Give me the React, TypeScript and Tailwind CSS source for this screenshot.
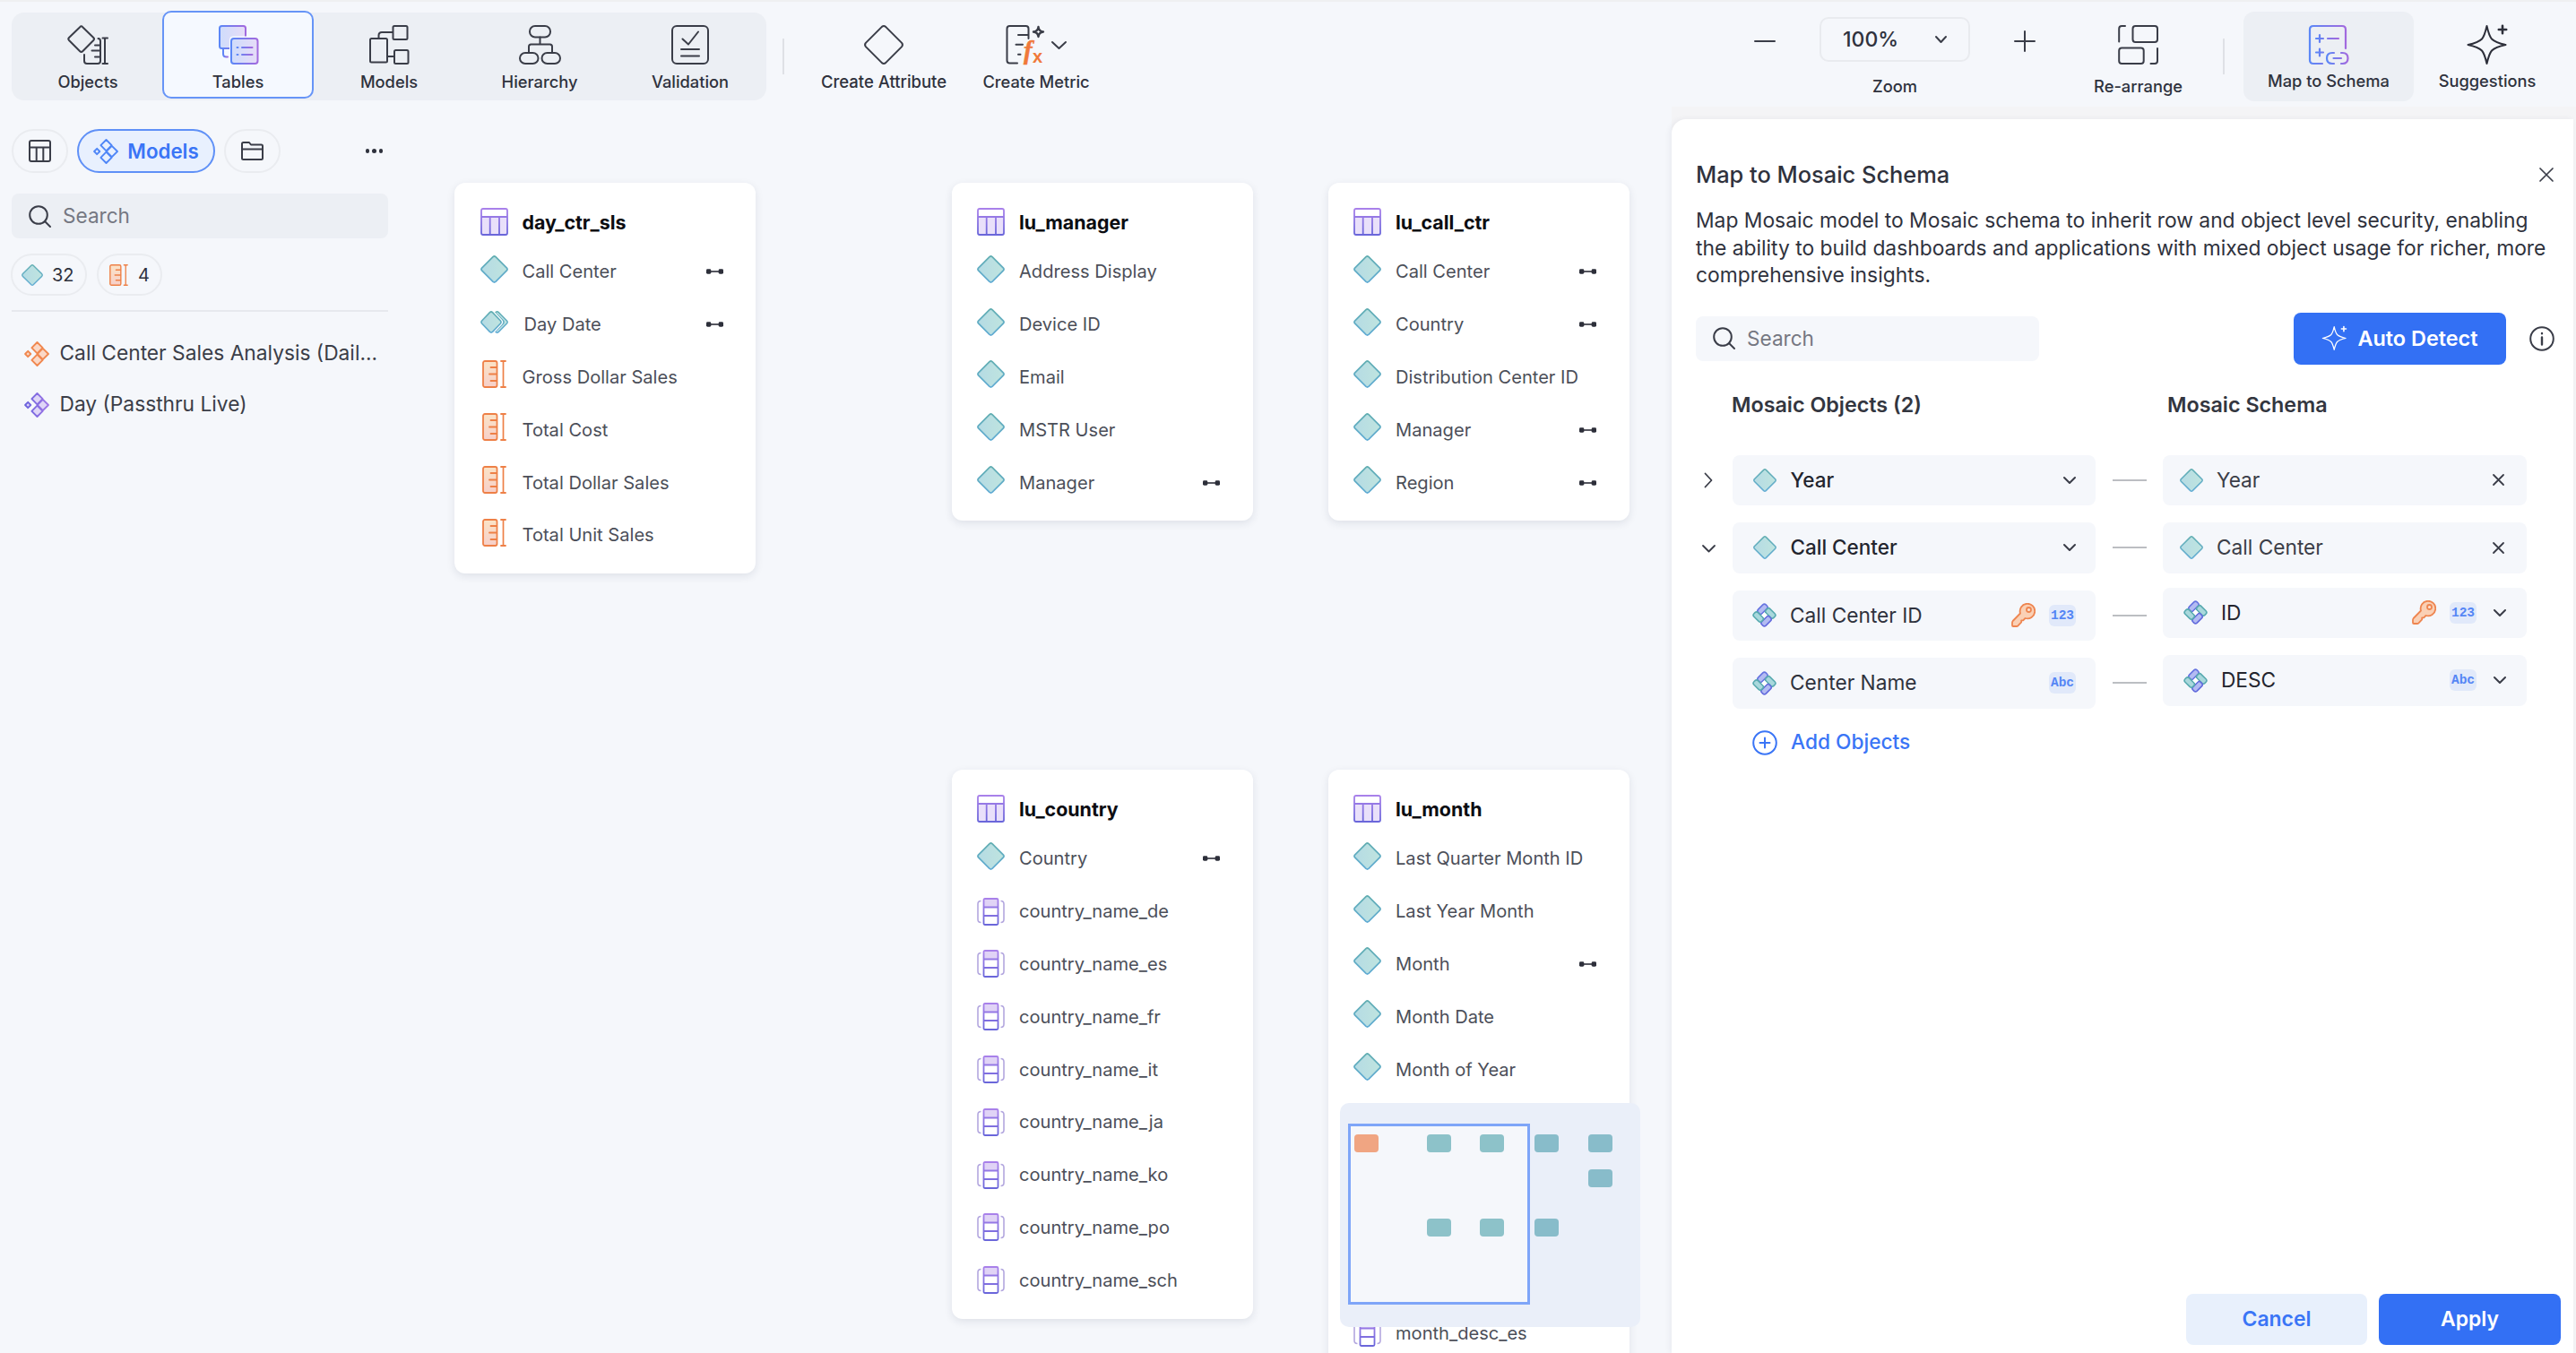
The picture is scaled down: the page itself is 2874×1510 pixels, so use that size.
import React from 'react';
import type { ReactNode } from 'react';

/* Shared gradient definitions used by the icons */
function Gradients() {
  const defs: [string, string, string, boolean][] = [
    ['gBrand', '#5b87f7', '#a26ade', true],
    ['gBrandFill', '#cfdcfb', '#e6dcf8', true],
    ['gTable', '#a981ea', '#6a66da', false],
    ['gAttr', '#62aeb2', '#62acd4', false],
    ['gAttrFill', '#b5dbe4', '#bfe4df', true],
    ['gMetricFill', '#fbe3c6', '#f6cfc9', false],
    ['gPurple', '#6a63dd', '#a077e6', true],
  ];
  return (
    <svg className="absolute size-0" aria-hidden="true">
      <defs>
        {defs.map(([id, a, b, horizontal]) => (
          <linearGradient key={id} id={id} x1="0" y1="0" x2={horizontal ? '1' : '0'} y2={horizontal ? '0' : '1'}>
            <stop offset="0" stopColor={a} />
            <stop offset="1" stopColor={b} />
          </linearGradient>
        ))}
      </defs>
    </svg>
  );
}

function Icon({ w, h, color = '#3a3d48', sw = 2, className = '', children }: { w: number; h: number; color?: string; sw?: number; className?: string; children: ReactNode }) {
  return (
    <svg width={w} height={h} viewBox={`0 0 ${w} ${h}`} fill="none" stroke={color} strokeWidth={sw} strokeLinecap="round" strokeLinejoin="round" className={`block shrink-0 overflow-visible ${className}`}>
      {children}
    </svg>
  );
}

/* ---------- toolbar icons ---------- */
const ObjectsIcon = () => (
  <Icon w={46} h={44}>
    <path d="M14.2 2.2 Q15.7 .4 17.2 2.2 L29.3 14 Q30.7 15.5 29.3 17 L17.2 29.2 Q15.7 30.8 14.2 29.2 L2 17 Q.6 15.5 2 14 Z" />
    <path d="M19 33 V40 Q19 43 22 43 H34 Q37 43 37 40 V18 Q37 15 34.5 15 M31 22.5 H36 M27.5 28.5 H36 M31 35.5 H36" />
    <path d="M42 15 V43 M39.5 14.5 H45 M39.5 43 H45" />
  </Icon>
);
const TablesIcon = () => (
  <Icon w={44} h={44} color="url(#gBrand)">
    <path d="M12 26 H3.5 Q1 26 1 23.5 V3.5 Q1 1 3.5 1 H27.5 Q30 1 30 3.5 V13" fill="url(#gBrandFill)" />
    <path d="M5 26 V32 Q5 35.5 8.5 35.5 H10" />
    <rect x="12" y="12.5" width="33" height="33" rx="4" fill="#f5f9ff" stroke="none" />
    <rect x="14" y="15" width="29.5" height="28" rx="3" fill="url(#gBrandFill)" />
    <path d="M20.5 25 H21.5 M26 25 H37.5 M20.5 33 H21.5 M26 33.01 H37.5" />
  </Icon>
);
const ModelsIcon = () => (
  <Icon w={44} h={44}>
    <rect x="1" y="15" width="19" height="26.5" rx="1.5" />
    <rect x="26.5" y="1" width="16" height="15" rx="1.5" />
    <rect x="28" y="28" width="15.5" height="15" rx="1.5" />
    <path d="M10.5 15 V11.5 Q10.5 8 14 8 H26 M20 35 H28" />
  </Icon>
);
const HierarchyIcon = () => (
  <Icon w={47} h={44}>
    <rect x="12" y="1" width="23" height="12.5" rx="6" />
    <rect x="1" y="31" width="20.5" height="12" rx="6" />
    <rect x="25.5" y="31" width="20.5" height="12" rx="6" />
    <path d="M23.5 13.5 V21.5 M11 31 V24 Q11 21.5 13.5 21.5 H34.5 Q37 21.5 37 24 V31" />
  </Icon>
);
const ValidationIcon = () => (
  <Icon w={42} h={44}>
    <rect x="1" y="1" width="40" height="42" rx="5" />
    <path d="M12.5 15.5 L19 21.5 L30 7.5 M11 27 H31 M11 34.5 H31" />
  </Icon>
);
const CreateAttributeIcon = () => (
  <Icon w={44} h={44}>
    <path d="M19.9 1.9 Q22 .2 24.1 1.9 L42.1 19.9 Q43.8 22 42.1 24.1 L24.1 42.1 Q22 43.8 19.9 42.1 L1.9 24.1 Q.2 22 1.9 19.9 Z" />
  </Icon>
);
const CreateMetricIcon = () => (
  <Icon w={44} h={44}>
    <path d="M25.5 15 V4 Q25.5 1 22.5 1 H4.5 Q1.5 1 1.5 4 V39.5 Q1.5 42.5 4.5 42.5 H13 M14 11 H25 M11.5 21.7 H19 M14 32.7 H16.5" />
    <path d="M36.5 2 Q37 7 42 7.5 Q37 8 36.5 13 Q36 8 31 7.5 Q36 7 36.5 2 Z" strokeWidth="2.4" />
    <text x="20" y="38" fontFamily="Liberation Serif, serif" fontStyle="italic" fontWeight="700" fontSize="29" fill="#f0793a" stroke="#f0793a" strokeWidth=".5">f</text>
    <text x="30" y="41.5" fontFamily="Liberation Sans, sans-serif" fontWeight="700" fontSize="20" fill="#f0793a" stroke="none">x</text>
  </Icon>
);
const RearrangeIcon = () => (
  <Icon w={45} h={44}>
    <path d="M1.2 18.5 V4 Q1.2 1 4.2 1 H8 M44 26 V40 Q44 43 41 43 H36.5" />
    <rect x="16.5" y="1" width="27.5" height="18" rx="3" />
    <rect x="1.2" y="25.5" width="27.5" height="17.5" rx="3" />
  </Icon>
);
const MapSchemaIcon = () => (
  <Icon w={44} h={44} color="url(#gBrand)" sw={2.2}>
    <path d="M15 43 H5 Q1 43 1 39 V5 Q1 1 5 1 H37 Q41 1 41 5 V26" />
    <path d="M12 11 V19 M8 15 H16 M21 15.01 H33 M12 26.5 V34.5 M8 30.5 H16" />
    <path d="M28 31 H26 Q20 31 20 37 Q20 43 26 43 H28 M36 31 H37.5 Q43.5 31 43.5 37 Q43.5 43 37.5 43 H36 M27.5 37 H36" />
  </Icon>
);
const SparkIcon = ({ size, color }: { size: number; color?: string }) => (
  <svg width={size} height={size} viewBox="0 0 44 44" fill="none" stroke={color ?? '#2d2f3a'} strokeWidth={2} strokeLinejoin="round" strokeLinecap="round" className="block shrink-0 overflow-visible">
    <path d="M21.5 1 Q24 12 27 15.5 Q31 19.5 42.5 22 Q31 24.5 27 28.5 Q24 32 21.5 43 Q19 32 16 28.5 Q12 24.5 .5 22 Q12 19.5 16 15.5 Q19 12 21.5 1 Z" />
    <path d="M39 .8 V9.2 M34.8 5 H43.2" strokeWidth="2.6" />
  </svg>
);

const Chevron = ({ w, h, className = '', color = '#3a3d48', sw = 2 }: { w: number; h: number; className?: string; color?: string; sw?: number }) => (
  <Icon w={w} h={h} sw={sw} color={color} className={className}>
    <path d={`M1 1 L${w / 2} ${h - 1} L${w - 1} 1`} />
  </Icon>
);
const Cross = ({ size, sw = 1.8 }: { size: number; sw?: number }) => (
  <Icon w={size} h={size} sw={sw}>
    <path d={`M1 1 L${size - 1} ${size - 1} M${size - 1} 1 L1 ${size - 1}`} />
  </Icon>
);
const SearchIcon = () => (
  <Icon w={25} h={25}>
    <circle cx="11" cy="11" r="9.8" />
    <path d="M18 18 L24 24" />
  </Icon>
);

/* ---------- object icons ---------- */
const Diamond = ({ size, className = '' }: { size: number; className?: string }) => (
  <svg width={size} height={size} viewBox="0 0 31 31" className={`block shrink-0 ${className}`}>
    <path d="M14 1.6 Q15.5 .4 17 1.6 L29.4 14 Q30.6 15.5 29.4 17 L17 29.4 Q15.5 30.6 14 29.4 L1.6 17 Q.4 15.5 1.6 14 Z" fill="url(#gAttrFill)" stroke="url(#gAttr)" strokeWidth="1.8" />
  </svg>
);
const DoubleDiamond = () => (
  <svg width="31" height="25" viewBox="0 0 31 25" className="mr-[2px] mb-[6px] block shrink-0">
    <path d="M16.5 2 Q18.5 -.2 20.5 1.8 L29.5 11 Q30.8 12.5 29.5 14 L20.5 23.2 Q18.5 25.2 16.5 23 L25.5 14 Q26.5 12.5 25.5 11 Z" fill="url(#gAttrFill)" stroke="url(#gAttr)" strokeWidth="1.5" />
    <path d="M10.5 1.6 Q12 .4 13.5 1.6 L22.4 11 Q23.6 12.5 22.4 14 L13.5 23.4 Q12 24.6 10.5 23.4 L1.6 14 Q.4 12.5 1.6 11 Z" fill="#fff" stroke="#fff" strokeWidth="4" />
    <path d="M10.5 1.6 Q12 .4 13.5 1.6 L22.4 11 Q23.6 12.5 22.4 14 L13.5 23.4 Q12 24.6 10.5 23.4 L1.6 14 Q.4 12.5 1.6 11 Z" fill="url(#gAttrFill)" stroke="url(#gAttr)" strokeWidth="1.7" />
  </svg>
);
const Metric = ({ w, h, className = '' }: { w: number; h: number; className?: string }) => (
  <svg width={w} height={h} viewBox="0 0 27 31" fill="none" stroke="#ee8047" strokeWidth="1.8" strokeLinecap="round" className={`block shrink-0 ${className}`}>
    <rect x="1" y="1" width="15.5" height="29" rx="2" fill="url(#gMetricFill)" />
    <path d="M9.5 8 H16 M8 15.5 H16 M9.5 23 H16" />
    <path d="M23.5 1 V30" strokeWidth="1.7" />
    <path d="M21 1 H26 M21 30 H26" />
  </svg>
);
const TableIcon = () => (
  <svg width="31" height="31" viewBox="0 0 31 31" fill="none" className="block shrink-0">
    <path d="M1 10 H30 V28 Q30 30 28 30 H3 Q1 30 1 28 Z" fill="#e9e0fa" />
    <path d="M3 1 H28 Q30 1 30 3 V28 Q30 30 28 30 H3 Q1 30 1 28 V3 Q1 1 3 1 Z M1 10 H30 M10.7 10 V30 M21 10 V30" stroke="url(#gTable)" strokeWidth="1.8" />
  </svg>
);
const ColumnIcon = () => (
  <svg width="31" height="31" viewBox="0 0 31 31" fill="none" className="block shrink-0">
    <path d="M4.5 3.5 Q1 3.5 1 7 V24 Q1 27.5 4.5 27.5 M26.5 3.5 Q30 3.5 30 7 V24 Q30 27.5 26.5 27.5" stroke="#b3a7df" strokeWidth="1.6" />
    <path d="M7.5 1 H23.5 V10.5 H7.5 Z" fill="#e0d3f6" />
    <path d="M9 1 H22 Q23.5 1 23.5 2.5 V28.5 Q23.5 30 22 30 H9 Q7.5 30 7.5 28.5 V2.5 Q7.5 1 9 1 Z M7.5 10.5 H23.5 M7.5 20 H23.5" stroke="url(#gTable)" strokeWidth="1.8" />
  </svg>
);
const LinkMark = () => (
  <svg width="19" height="6" viewBox="0 0 19 6" className="ml-auto block shrink-0" fill="#2d2f3a">
    <rect x="0" y=".3" width="5.3" height="5.4" rx="1.4" />
    <rect x="13.7" y=".3" width="5.3" height="5.4" rx="1.4" />
    <rect x="5" y="2.2" width="9" height="1.6" />
  </svg>
);
const ModelMark = ({ stroke, fill }: { stroke: string; fill: string }) => (
  <Icon w={28} h={28} color={stroke} sw={1.9}>
    <path fill={fill} d="M14.5 1 L20.6 7.2 L14.5 13.4 L8.4 7.2 Z M20.8 7.8 L27 14 L20.8 20.2 L14.6 14 Z M14.5 14.6 L20.6 20.8 L14.5 27 L8.4 20.8 Z M4.2 10.8 L7.3 14 L4.2 17.2 L1.1 14 Z" />
  </Icon>
);
const FormIcon = () => (
  <svg width="27" height="27" viewBox="0 0 27 27" className="block shrink-0 overflow-visible">
    <g transform="translate(13.5 13.5) rotate(45) translate(-9 -9)" strokeWidth="1.6">
      <rect x="-.4" y="-.4" width="6.4" height="12.2" rx="2.4" fill="#b3bbf2" stroke="#6674e0" />
      <rect x="6.2" y="-.4" width="12.2" height="6.4" rx="2.4" fill="#a9d8dc" stroke="#58aab0" />
      <rect x="12" y="6.2" width="6.4" height="12.2" rx="2.4" fill="#b3bbf2" stroke="#636bdd" />
      <rect x="-.4" y="12" width="12.2" height="6.4" rx="2.4" fill="#a9d8dc" stroke="#58aab0" />
      <rect x="6.7" y="6.7" width="4.6" height="4.6" fill="#fff" />
    </g>
  </svg>
);
const KeyIcon = () => (
  <svg width="27" height="27" viewBox="0 0 27 27" fill="#fad0b5" stroke="#ee8550" strokeWidth="1.8" strokeLinejoin="round" className="block shrink-0">
    <path d="M10 11.5 A8.3 8.3 0 1 1 15.5 17 L13.2 19.3 H11.2 V21.3 L7.2 25.6 Q6.8 26 6 26 H2 Q1 26 1 25 V21.8 Q1 20.8 1.7 20 Z" />
    <circle cx="19.5" cy="7.5" r="2.5" fill="#fbe3d4" />
  </svg>
);
const TypeBadge = ({ children }: { children: string }) => (
  <span className="flex h-6 w-[30px] shrink-0 items-center justify-center rounded-[6px] bg-[#e1e9fa] font-['Liberation_Mono',monospace] text-[14.5px] leading-none font-bold text-[#5586f5]">{children}</span>
);

/* ---------- toolbar ---------- */
function Tool({ label, icon, className = '', labelClass = 'mt-2' }: { label: string; icon: ReactNode; className?: string; labelClass?: string }) {
  return (
    <button className={`flex shrink-0 flex-col items-center text-[18.3px] leading-[22px] font-medium whitespace-nowrap text-[#2f323d] ${className}`}>
      {icon}
      <span className={labelClass}>{label}</span>
    </button>
  );
}

const Divider = ({ className = '' }: { className?: string }) => <span className={`mt-[43px] h-10 w-[2px] shrink-0 bg-[#dfe1e6] ${className}`} />;

function Toolbar() {
  return (
    <header className="flex h-[119px] shrink-0 items-start border-t-2 border-[#eff0f1] [&>*]:-translate-y-[2px]">
      <nav className="mt-[14px] ml-[13px] flex h-[98px] rounded-[14px] bg-[#eceff4] pr-px">
        <Tool label="Objects" icon={<ObjectsIcon />} className="w-[168px] pt-[14px] pl-[2px]" />
        <Tool label="Tables" icon={<TablesIcon />} className="-mt-[2px] h-[98px] w-[169px] rounded-[10px] border-2 border-[#6694f7] bg-[#f5f9ff] pt-[14px]" />
        <Tool label="Models" icon={<ModelsIcon />} className="w-[168px] pt-[14px]" />
        <Tool label="Hierarchy" icon={<HierarchyIcon />} className="w-[168px] pt-[14px]" />
        <Tool label="Validation" icon={<ValidationIcon />} className="w-[168px] pt-[14px]" />
      </nav>
      <Divider className="ml-[18px]" />
      <Tool label="Create Attribute" icon={<CreateAttributeIcon />} className="ml-10 w-[142px] pt-7 text-[18.5px]!" />
      <Tool
        label="Create Metric"
        icon={
          <span className="flex items-center gap-[7px]">
            <CreateMetricIcon />
            <Chevron w={17} h={9} />
          </span>
        }
        className="ml-[39px] w-[120px] pt-7"
      />
      <Icon w={24} h={24} className="mt-[34px] ml-auto">
        <path d="M1 12 H23" />
      </Icon>
      <div className="mt-[19px] ml-[49px] flex w-[168px] flex-col items-center text-[#2f323d]">
        <div className="flex h-[50px] w-full items-center justify-between rounded-[10px] border-2 border-[#e9ebef] pr-6 pl-6 text-[23px] font-medium">
          100%
          <Chevron w={13} h={8} />
        </div>
        <span className="mt-4 text-[18.3px] leading-[22px] font-medium">Zoom</span>
      </div>
      <Icon w={24} h={24} className="mt-[34px] ml-[49px]">
        <path d="M1 12 H23 M12 1 V23" />
      </Icon>
      <Tool label="Re-arrange" icon={<RearrangeIcon />} labelClass="mt-[13px]" className="ml-[65px] w-[99px] pt-7" />
      <Divider className="ml-[45px]" />
      <Tool label="Map to Schema" icon={<MapSchemaIcon />} labelClass="mt-[7px]" className="mt-[13px] ml-[21px] h-[100px] w-[190px] rounded-[12px] bg-[#eceff4] pt-[15px]" />
      <Tool label="Suggestions" icon={<SparkIcon size={44} />} labelClass="mt-[7px]" className="mr-[45px] ml-[28px] w-[108px] pt-7" />
    </header>
  );
}

/* ---------- left sidebar ---------- */
function Sidebar() {
  return (
    <aside className="flex w-[460px] shrink-0 flex-col pt-[25px] pl-[13px] text-[#2f323d]">
      <div className="flex w-[420px] items-center gap-[10px]">
        <button className="flex h-[49px] w-[63px] items-center justify-center rounded-full border-2 border-[#eaecf0]">
          <Icon w={25} h={25}>
            <path d="M3 1 H22 Q24 1 24 3 V22 Q24 24 22 24 H3 Q1 24 1 22 V3 Q1 1 3 1 Z M1 8.5 H24 M8.7 8.5 V24 M16.3 8.5 V24" />
          </Icon>
        </button>
        <button className="flex h-[49px] w-[154px] items-center justify-center gap-[10px] rounded-full border-2 border-[#5f90f7] bg-[#e8f0fe] text-[22.3px] font-semibold text-[#3a75f6]">
          <ModelMark stroke="#4f86f7" fill="none" />
          Models
        </button>
        <button className="flex h-[49px] w-[63px] items-center justify-center rounded-full border-2 border-[#eaecf0]">
          <Icon w={25} h={21}>
            <path d="M2.5 1 H9 L11 3.5 H22.5 Q24 3.5 24 5 V18.5 Q24 20 22.5 20 H2.5 Q1 20 1 18.5 V2.5 Q1 1 2.5 1 Z M1 8.5 H24" />
          </Icon>
        </button>
        <span className="mr-[6px] ml-auto flex gap-[3px]">
          <i className="size-[4.5px] rounded-full bg-[#2f323d]" />
          <i className="size-[4.5px] rounded-full bg-[#2f323d]" />
          <i className="size-[4.5px] rounded-full bg-[#2f323d]" />
        </span>
      </div>
      <div className="mt-[23px] flex h-[50px] w-[420px] items-center gap-[13px] rounded-[8px] bg-[#eceff4] pl-[19px] text-[22.6px] text-[#757882]">
        <SearchIcon />
        Search
      </div>
      <div className="mt-[17px] -ml-px flex gap-[11px] text-[20px]">
        <span className="flex h-[47px] w-[85px] items-center gap-[10px] rounded-full border-2 border-[#eaecf0] pl-[10px]">
          <Diamond size={24} />
          32
        </span>
        <span className="flex h-[47px] w-[73px] items-center gap-[11px] rounded-full border-2 border-[#eaecf0] pl-3">
          <Metric w={21} h={24} />4
        </span>
      </div>
      <div className="mt-4 h-[2px] w-[420px] bg-[#e7e9ee]" />
      <div className="mt-[18px] flex flex-col text-[22.75px] text-[#3b3e48]">
        <div className="flex h-[57px] items-center gap-[11.5px] pl-[14px]">
          <ModelMark stroke="#f0884f" fill="#fbd8c6" />
          Call Center Sales Analysis (Dail...
        </div>
        <div className="flex h-[57px] items-center gap-[11.5px] pl-[14px]">
          <ModelMark stroke="url(#gPurple)" fill="#dfd6f7" />
          Day (Passthru Live)
        </div>
      </div>
    </aside>
  );
}

/* ---------- canvas ---------- */
type Kind = 'attr' | 'multi' | 'metric' | 'col';
type Row = [kind: Kind, name: string, linked?: boolean];

function RowIcon({ kind }: { kind: Kind }) {
  if (kind === 'attr') return <Diamond size={31} className="mb-[6px]" />;
  if (kind === 'multi') return <DoubleDiamond />;
  if (kind === 'metric') return <Metric w={27} h={31} className="mr-0.5 mb-[6px] ml-0.5" />;
  return <ColumnIcon />;
}

function TableCard({ title, rows, className, children }: { title: string; rows: Row[]; className: string; children?: ReactNode }) {
  return (
    <section className={`absolute w-[336px] rounded-[12px] bg-white pb-[13.5px] shadow-[0_3px_10px_rgba(30,40,70,0.10)] ${className}`}>
      <h3 className="flex h-[70.5px] items-center gap-4 pt-[18px] pl-[28.5px] text-[21.4px] font-bold text-[#0c0d12]">
        <TableIcon />
        {title}
      </h3>
      {rows.map(([kind, name, linked]) => (
        <div key={name} className="flex h-[58.8px] items-center gap-4 pr-[36.5px] pl-[28.5px] text-[20.1px] whitespace-nowrap text-[#4c4f59]">
          <RowIcon kind={kind} />
          {name}
          {linked && <LinkMark />}
        </div>
      ))}
      {children}
    </section>
  );
}

const countryCols: Row[] = ['de', 'es', 'fr', 'it', 'ja', 'ko', 'po', 'sch'].map((s) => ['col', `country_name_${s}`]);

const mapNodes = [
  'left-[97px] top-[35px] bg-[#8dc2c9]',
  'left-[156px] top-[35px] bg-[#8dc2c9]',
  'left-[217px] top-[35px] bg-[#88bcca]',
  'left-[277px] top-[35px] bg-[#88bcca]',
  'left-[277px] top-[74px] bg-[#88bcca]',
  'left-[97px] top-[129px] bg-[#8dc2c9]',
  'left-[156px] top-[129px] bg-[#8dc2c9]',
  'left-[217px] top-[129px] bg-[#88bcca]',
  'left-[16px] top-[35px] bg-[#f0a582]',
];

function Canvas() {
  return (
    <main className="relative min-w-0 flex-1 overflow-hidden">
      <TableCard
        title="day_ctr_sls"
        className="top-[84.5px] left-[47px]"
        rows={[['attr', 'Call Center', true], ['multi', 'Day Date', true], ['metric', 'Gross Dollar Sales'], ['metric', 'Total Cost'], ['metric', 'Total Dollar Sales'], ['metric', 'Total Unit Sales']]}
      />
      <TableCard
        title="lu_manager"
        className="top-[84.5px] left-[601.5px]"
        rows={[['attr', 'Address Display'], ['attr', 'Device ID'], ['attr', 'Email'], ['attr', 'MSTR User'], ['attr', 'Manager', true]]}
      />
      <TableCard
        title="lu_call_ctr"
        className="top-[84.5px] left-[1021.5px]"
        rows={[['attr', 'Call Center', true], ['attr', 'Country', true], ['attr', 'Distribution Center ID'], ['attr', 'Manager', true], ['attr', 'Region', true]]}
      />
      <TableCard title="lu_country" className="top-[739.5px] left-[601.5px]" rows={[['attr', 'Country', true], ...countryCols]} />
      <TableCard
        title="lu_month"
        className="top-[739.5px] left-[1021.5px] h-[720px]"
        rows={[['attr', 'Last Quarter Month ID'], ['attr', 'Last Year Month'], ['attr', 'Month', true], ['attr', 'Month Date'], ['attr', 'Month of Year']]}
      >
        <div className="mt-[235.2px] flex h-[58.8px] items-center gap-4 pl-[28.5px] text-[20.1px] text-[#4c4f59]">
          <ColumnIcon />
          month_desc_es
        </div>
      </TableCard>

      {/* minimap */}
      <div className="absolute top-[1112px] left-[1035px] h-[250px] w-[335px] rounded-[10px] bg-[#eaeff9]">
        <div className="absolute top-[23px] left-[9px] h-[202px] w-[203px] border-[3px] border-[#7ea5f8] bg-[#f5f7fb]" />
        {mapNodes.map((c) => (
          <div key={c} className={`absolute h-5 w-[27px] rounded-[4px] ${c}`} />
        ))}
      </div>
    </main>
  );
}

/* ---------- mapping panel ---------- */
function Slot({ children, className = '' }: { children: ReactNode; className?: string }) {
  return <div className={`flex h-[56.5px] shrink-0 items-center rounded-[8px] bg-[#f5f7fb] ${className}`}>{children}</div>;
}

function Panel() {
  return (
    <div className="w-[1009px] shrink-0 bg-[#f4f4f6] pt-[14px] pr-[3px]">
      <section className="flex h-full flex-col rounded-tl-[16px] bg-white pr-[14px] pb-[9px] pl-[27px] text-[22.7px] text-[#2f323d] shadow-[-2px_0_6px_rgba(30,40,70,0.06)]">
        <div className="flex items-center justify-between pt-[44px] pr-2">
          <h2 className="text-[25.4px] leading-[36px] font-medium">Map to Mosaic Schema</h2>
          <Cross size={16} sw={1.7} />
        </div>
        <p className="mt-[18px] mb-[26px] text-[22.82px] leading-[30.5px] whitespace-nowrap">
          Map Mosaic model to Mosaic schema to inherit row and object level security, enabling
          <br />
          the ability to build dashboards and applications with mixed object usage for richer, more
          <br />
          comprehensive insights.
        </p>
        <div className="flex h-[58px] items-center pr-[7px]">
          <div className="flex h-[50px] w-[383px] items-center gap-[13px] rounded-[8px] bg-[#f5f7fb] pl-[19px] text-[22.6px] text-[#757882]">
            <SearchIcon />
            Search
          </div>
          <button className="ml-auto flex h-[58px] w-[237px] items-center justify-center gap-[13px] rounded-[8px] bg-[#3370f4] text-[23.4px] font-semibold text-white">
            <SparkIcon size={27} color="#fff" />
            Auto Detect
          </button>
          <Icon w={28} h={28} className="ml-[26px]">
            <circle cx="14" cy="14" r="12.8" />
            <path d="M14 12.5 V20.5 M14 8 V8.2" strokeWidth="2.4" />
          </Icon>
        </div>
        <div className="mt-[31px] flex pl-[40px] text-[23.3px] leading-[28px] font-semibold text-[#33363f]">
          <span className="w-[486px]">Mosaic Objects (2)</span>
          <span>Mosaic Schema</span>
        </div>

        <div className="mt-[42px] flex items-start">
          <div className="flex w-[41px] shrink-0 flex-col pt-[20px]">
            <Icon w={16} h={16} className="ml-[6px]" sw={1.8}>
              <path d="M4.5 0.5 L11.5 8 L4.5 15.5" />
            </Icon>
            <Chevron w={15} h={8.5} className="mt-[64px] ml-[7px]" sw={1.8} />
          </div>
          <div className="flex w-[405px] shrink-0 flex-col gap-[19px]">
            {['Year', 'Call Center'].map((name) => (
              <Slot key={name} className="gap-[15.5px] pr-[22px] pl-[23px] text-[22.5px] font-medium text-[#23252e]">
                <Diamond size={26} />
                {name}
                <Chevron w={14} h={8} className="ml-auto" />
              </Slot>
            ))}
            <Slot className="pr-[22px] pl-[22px]">
              <FormIcon />
              <span className="mr-auto ml-[15px]">Call Center ID</span>
              <KeyIcon />
              <span className="ml-[15px]">
                <TypeBadge>123</TypeBadge>
              </span>
            </Slot>
            <Slot className="pr-[22px] pl-[22px]">
              <FormIcon />
              <span className="mr-auto ml-[15px]">Center Name</span>
              <TypeBadge>Abc</TypeBadge>
            </Slot>
            <button className="mt-1 flex h-[30px] items-center gap-[15px] pl-[22px] text-[22.7px] font-medium text-[#3a75f6]">
              <Icon w={28} h={28} color="#3a75f6">
                <circle cx="14" cy="14" r="12.8" />
                <path d="M14 8.5 V19.5 M8.5 14 H19.5" />
              </Icon>
              Add Objects
            </button>
          </div>
          <div className="flex w-[75px] shrink-0 flex-col items-center gap-[73.5px] pt-[27px]">
            <i className="h-[2px] w-[38px] bg-[#bcbec2]" />
            <i className="h-[2px] w-[38px] bg-[#bcbec2]" />
            <i className="h-[2px] w-[38px] bg-[#bcbec2]" />
            <i className="h-[2px] w-[38px] bg-[#bcbec2]" />
          </div>
          <div className="flex w-[406px] shrink-0 flex-col gap-[19px]">
            {['Year', 'Call Center'].map((name) => (
              <Slot key={name} className="gap-[15.5px] pr-[25px] pl-[18.5px] text-[#3b3e48]">
                <Diamond size={26} />
                {name}
                <span className="ml-auto">
                  <Cross size={13} />
                </span>
              </Slot>
            ))}
            <Slot className="-mt-[3px] pr-[23px] pl-[23px] text-[#23252e]">
              <FormIcon />
              <span className="mr-auto ml-[15px]">ID</span>
              <KeyIcon />
              <span className="mr-[19px] ml-[15px]">
                <TypeBadge>123</TypeBadge>
              </span>
              <Chevron w={14} h={8} />
            </Slot>
            <Slot className="pr-[23px] pl-[23px] text-[#23252e]">
              <FormIcon />
              <span className="mr-[19px] ml-[15px] flex-1">DESC</span>
              <TypeBadge>Abc</TypeBadge>
              <Chevron w={14} h={8} className="ml-[19px]" />
            </Slot>
          </div>
        </div>

        <div className="mt-auto flex justify-end gap-[13px] text-[22.9px] font-semibold">
          <button className="h-[57px] w-[202px] rounded-[8px] bg-[#e8f0fc] text-[#3a75f6]">Cancel</button>
          <button className="h-[57px] w-[203px] rounded-[8px] bg-[#3370f4] text-white">Apply</button>
        </div>
      </section>
    </div>
  );
}

export default function App() {
  return (
    <div className="flex h-[1510px] w-full flex-col overflow-hidden bg-[#f5f7fb] font-[Inter,sans-serif]">
      <Gradients />
      <Toolbar />
      <div className="flex min-h-0 flex-1">
        <Sidebar />
        <Canvas />
        <Panel />
      </div>
    </div>
  );
}
